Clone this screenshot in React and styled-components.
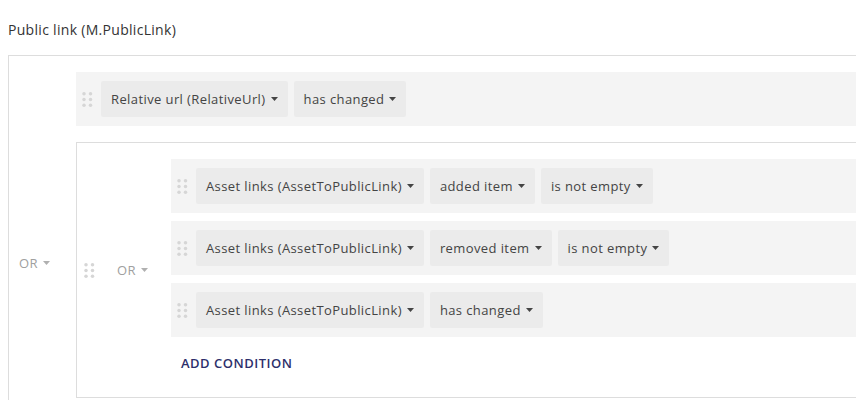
import React from "react";
import styled, { createGlobalStyle } from "styled-components";

const Global = createGlobalStyle`
  html, body { margin: 0; padding: 0; background: #fff; overflow: hidden; }
  body { font-family: "Open Sans", "Liberation Sans", sans-serif; font-size: 13px; color: #333; }
`;

const Page = styled.div`
  padding: 21px 0 0 8px;
  width: 1100px;
`;

const Title = styled.div`
  font-size: 14px;
  line-height: 18px;
  letter-spacing: 0.3px;
  color: #333;
  margin-bottom: 16px;
`;

const Group = styled.div`
  display: flex;
  border: 1px solid #ddd;
  background: #fff;
  width: ${(p) => p.$width || "auto"};
`;

const Combinator = styled.div`
  display: flex;
  align-items: center;
  flex: 0 0 auto;
  width: ${(p) => p.$width}px;
  padding-left: ${(p) => p.$pad}px;
  box-sizing: border-box;
  gap: 22px;
`;

const OrLabel = styled.span`
  display: inline-flex;
  align-items: center;
  color: #a0a0a0;
  font-size: 13px;
  line-height: 18px;
  letter-spacing: 0.4px;
`;

const Content = styled.div`
  flex: 1;
  display: flex;
  flex-direction: column;
  gap: ${(p) => p.$gap}px;
  padding-top: 16px;
  padding-bottom: ${(p) => p.$bottom || 0}px;
  min-width: 0;
`;

const Row = styled.div`
  display: flex;
  align-items: center;
  height: 54px;
  background: #f4f4f4;
  padding-left: 6px;
`;

const HandleWrap = styled.span`
  display: inline-flex;
  width: 11px;
  margin-right: 8px;
`;

const Chips = styled.div`
  display: flex;
  gap: 6px;
`;

const Chip = styled.span`
  display: inline-flex;
  align-items: center;
  height: 36px;
  padding: 0 10px;
  background: #ebebeb;
  border-radius: 2px;
  color: #444;
  font-size: 13px;
  letter-spacing: 0.4px;
  white-space: nowrap;
`;

const Caret = styled.svg`
  margin-left: 5px;
  flex: 0 0 auto;
`;

const AddCondition = styled.div`
  padding: ${(p) => p.$top}px 0 25px 10px;
  font-size: 13px;
  line-height: 18px;
  font-weight: 600;
  color: #2d2f6b;
  letter-spacing: 0.5px;
`;

const Handle = () => (
  <svg width="11" height="15" viewBox="0 0 11 15">
    {[1.75, 7.5, 13.25].map((y) =>
      [2, 8.5].map((x) => <circle key={x + "-" + y} cx={x} cy={y} r="1.75" fill="#d6d6d6" />)
    )}
  </svg>
);

const Down = ({ color = "#444" }) => (
  <Caret width="7" height="4" viewBox="0 0 7 4">
    <path d="M0 0 L7 0 L3.5 4 Z" fill={color} />
  </Caret>
);

const Select = ({ children }) => (
  <Chip>
    {children}
    <Down />
  </Chip>
);

const Condition = ({ items }) => (
  <Row>
    <HandleWrap>
      <Handle />
    </HandleWrap>
    <Chips>
      {items.map((t) => (
        <Select key={t}>{t}</Select>
      ))}
    </Chips>
  </Row>
);

const Or = () => (
  <OrLabel>
    OR
    <Down color="#b0b0b0" />
  </OrLabel>
);

export default function App() {
  return (
    <>
      <Global />
      <Page>
        <Title>Public link (M.PublicLink)</Title>
        <Group $width="1060px">
          <Combinator $width={67} $pad={10}>
            <Or />
          </Combinator>
          <Content $gap={16} $bottom={12}>
            <Condition items={["Relative url (RelativeUrl)", "has changed"]} />
            <Group>
              <Combinator $width={94} $pad={7}>
                <Handle />
                <Or />
              </Combinator>
              <Content $gap={8}>
                <Condition items={["Asset links (AssetToPublicLink)", "added item", "is not empty"]} />
                <Condition items={["Asset links (AssetToPublicLink)", "removed item", "is not empty"]} />
                <Condition items={["Asset links (AssetToPublicLink)", "has changed"]} />
                <AddCondition $top={9}>ADD CONDITION</AddCondition>
              </Content>
            </Group>
            <AddCondition $top={0}>ADD CONDITION</AddCondition>
          </Content>
        </Group>
      </Page>
    </>
  );
}
